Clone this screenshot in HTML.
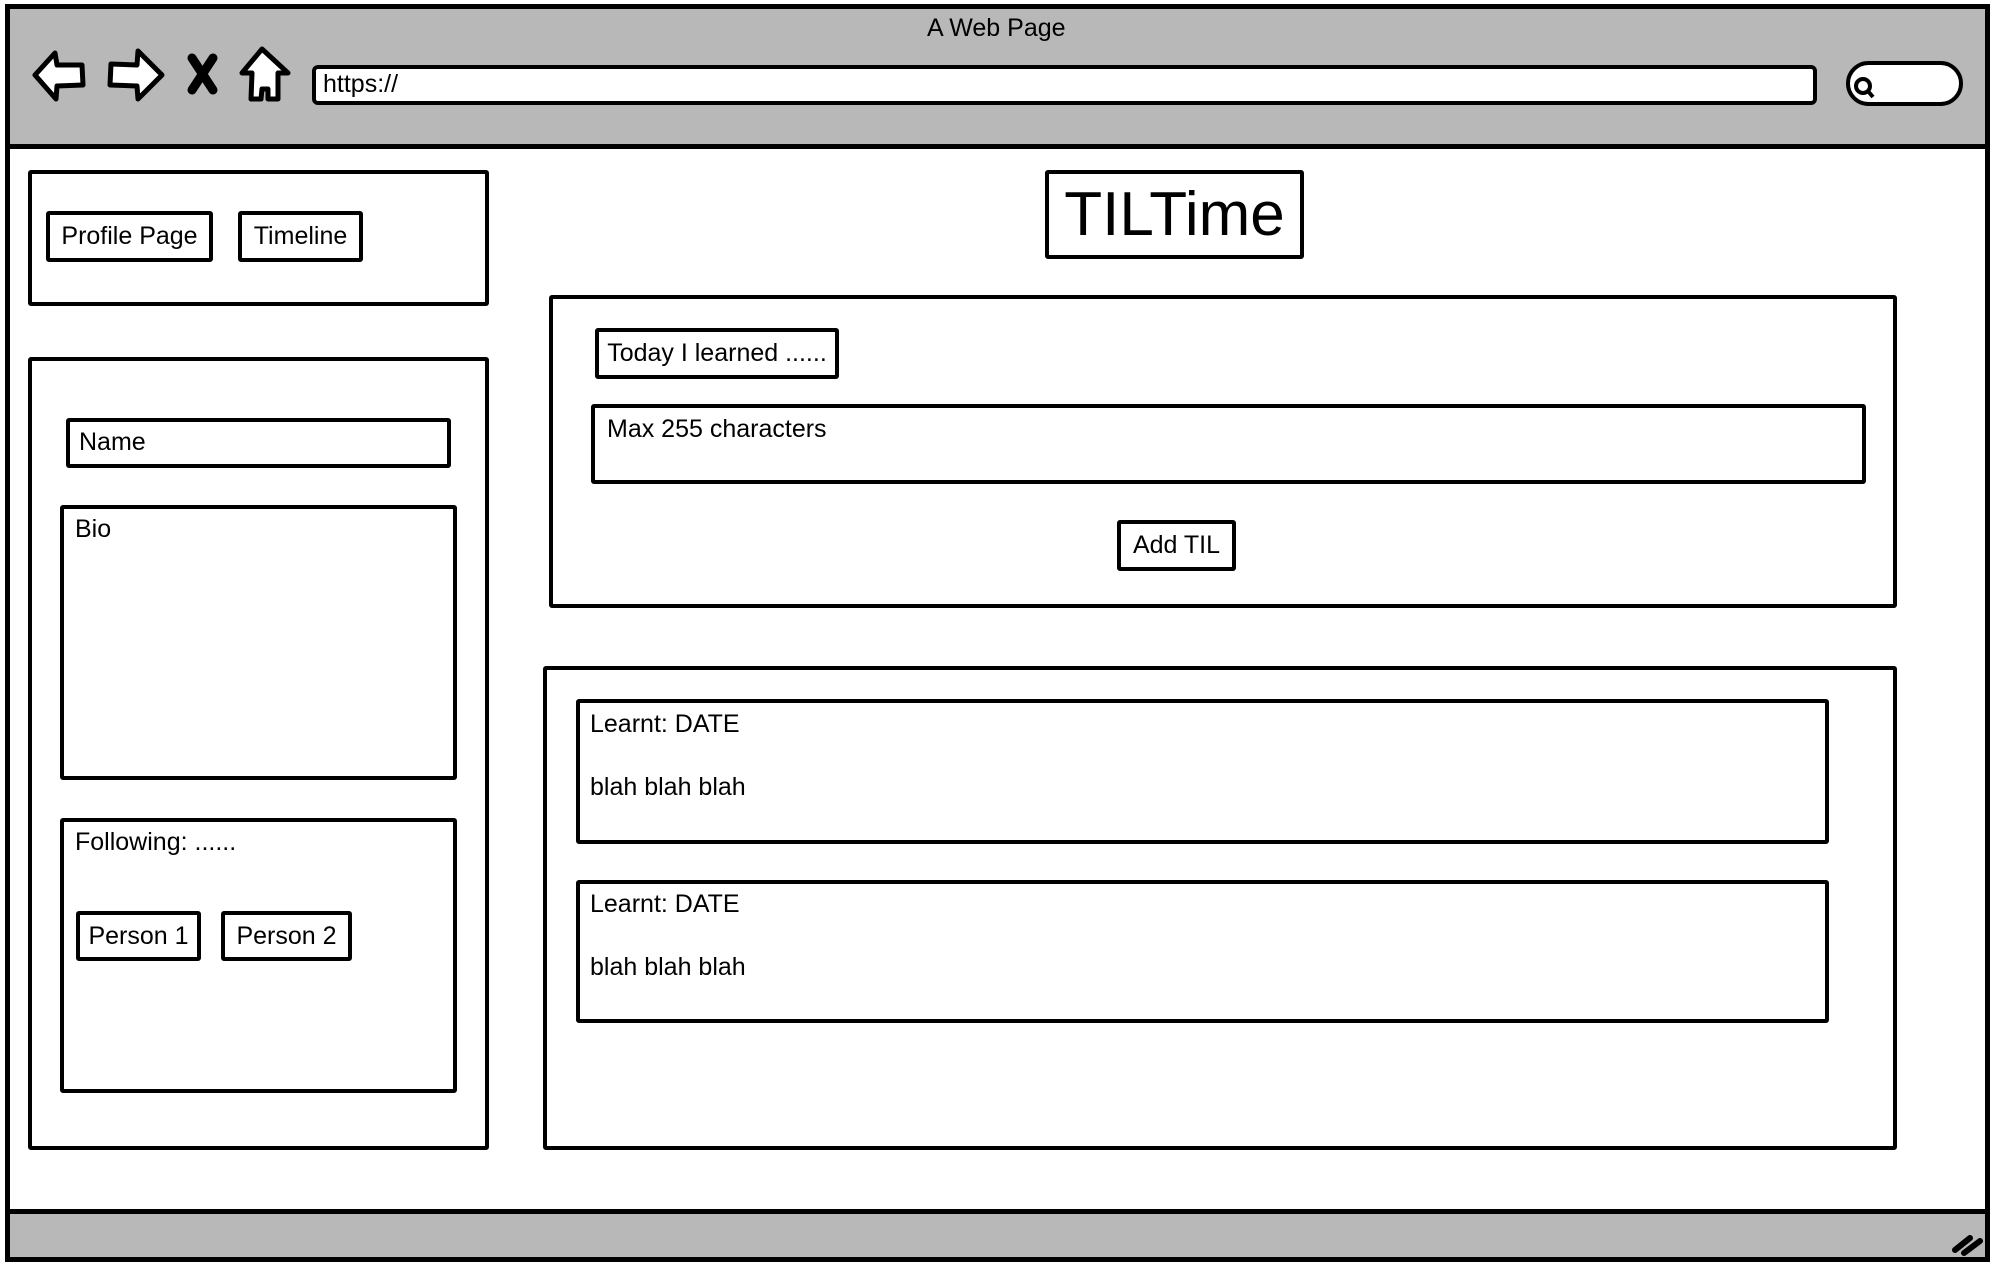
<!DOCTYPE html>
<html><head><meta charset="utf-8"><style>
*{margin:0;padding:0;box-sizing:border-box}
body{width:1994px;height:1262px;background:#fff;position:relative;overflow:hidden;font-family:"Liberation Sans",sans-serif;color:#000}
.a{position:absolute}
.b{position:absolute;border:4px solid #000;background:#fff;border-radius:3px}
.t{position:absolute;font-size:25px;white-space:nowrap;line-height:1}
.btn{position:absolute;border:4px solid #000;background:#fff;font-size:25px;display:flex;align-items:center;justify-content:center;border-radius:3px}
</style></head><body>
<div class="a" style="left:5px;top:4px;width:1985px;height:1256px;border:5px solid #000;background:#fff"></div>
<div class="a" style="left:5px;top:4px;width:1985px;height:145px;border:5px solid #000;background:#b8b8b8"></div>
<div class="a" style="left:5px;top:1209px;width:1985px;height:53px;border:5px solid #000;background:#b8b8b8"></div>
<div class="t" style="left:927px;top:16px;font-size:25px">A Web Page</div>
<svg class="a" style="left:30px;top:45px" width="270" height="60" viewBox="0 0 270 60">
<path d="M5 30 L25 8 L27 20 L52 20 L53 40 L27 41 L26 54 Z" fill="#fff" stroke="#000" stroke-width="5" stroke-linejoin="round"/>
<path d="M132 30 L108 6 L107 20 L81 19 L80 40 L107 41 L108 54 Z" fill="#fff" stroke="#000" stroke-width="5" stroke-linejoin="round"/>
<path d="M162 13 L183 45 M183 13 L162 45" stroke="#000" stroke-width="9" stroke-linecap="round"/>
<path d="M232 4 L212 28 L222 28 L221 54 L231 54 L232 44 L238 44 L238 54 L248 54 L248 28 L258 28 Z" fill="#fff" stroke="#000" stroke-width="5" stroke-linejoin="round"/>
</svg>
<div class="a" style="left:312px;top:65px;width:1505px;height:40px;border:4px solid #000;background:#fff;border-radius:6px"></div>
<div class="t" style="left:323px;top:72px">https://</div>
<div class="a" style="left:1846px;top:61px;width:117px;height:45px;border:4px solid #000;background:#fff;border-radius:24px"></div>
<svg class="a" style="left:1851px;top:74px" width="30" height="28"><circle cx="12" cy="12" r="7" fill="none" stroke="#000" stroke-width="4"/><path d="M16 16 L22 23" stroke="#000" stroke-width="4"/></svg>
<svg class="a" style="left:1950px;top:1228px" width="40" height="30"><path d="M5 22 L20 10 M14 25 L30 13" stroke="#000" stroke-width="6" stroke-linecap="round"/></svg>

<div class="b" style="left:28px;top:170px;width:461px;height:136px"></div>
<div class="btn" style="left:46px;top:211px;width:167px;height:51px">Profile Page</div>
<div class="btn" style="left:238px;top:211px;width:125px;height:51px">Timeline</div>

<div class="b" style="left:28px;top:357px;width:461px;height:793px"></div>
<div class="b" style="left:66px;top:418px;width:385px;height:50px"></div>
<div class="t" style="left:79px;top:430px">Name</div>
<div class="b" style="left:60px;top:505px;width:397px;height:275px"></div>
<div class="t" style="left:75px;top:517px">Bio</div>
<div class="b" style="left:60px;top:818px;width:397px;height:275px"></div>
<div class="t" style="left:75px;top:830px">Following: ......</div>
<div class="btn" style="left:76px;top:911px;width:125px;height:50px">Person 1</div>
<div class="btn" style="left:221px;top:911px;width:131px;height:50px">Person 2</div>

<div class="b" style="left:1045px;top:170px;width:259px;height:89px;display:flex;align-items:center;justify-content:center;font-size:62px">TILTime</div>

<div class="b" style="left:549px;top:295px;width:1348px;height:313px"></div>
<div class="btn" style="left:595px;top:328px;width:244px;height:51px">Today I learned ......</div>
<div class="b" style="left:591px;top:404px;width:1275px;height:80px"></div>
<div class="t" style="left:607px;top:417px">Max 255 characters</div>
<div class="btn" style="left:1117px;top:520px;width:119px;height:51px">Add TIL</div>

<div class="b" style="left:543px;top:666px;width:1354px;height:484px"></div>
<div class="b" style="left:576px;top:699px;width:1253px;height:145px"></div>
<div class="t" style="left:590px;top:712px">Learnt: DATE</div>
<div class="t" style="left:590px;top:775px">blah blah blah</div>
<div class="b" style="left:576px;top:880px;width:1253px;height:143px"></div>
<div class="t" style="left:590px;top:892px">Learnt: DATE</div>
<div class="t" style="left:590px;top:955px">blah blah blah</div>
</body></html>
